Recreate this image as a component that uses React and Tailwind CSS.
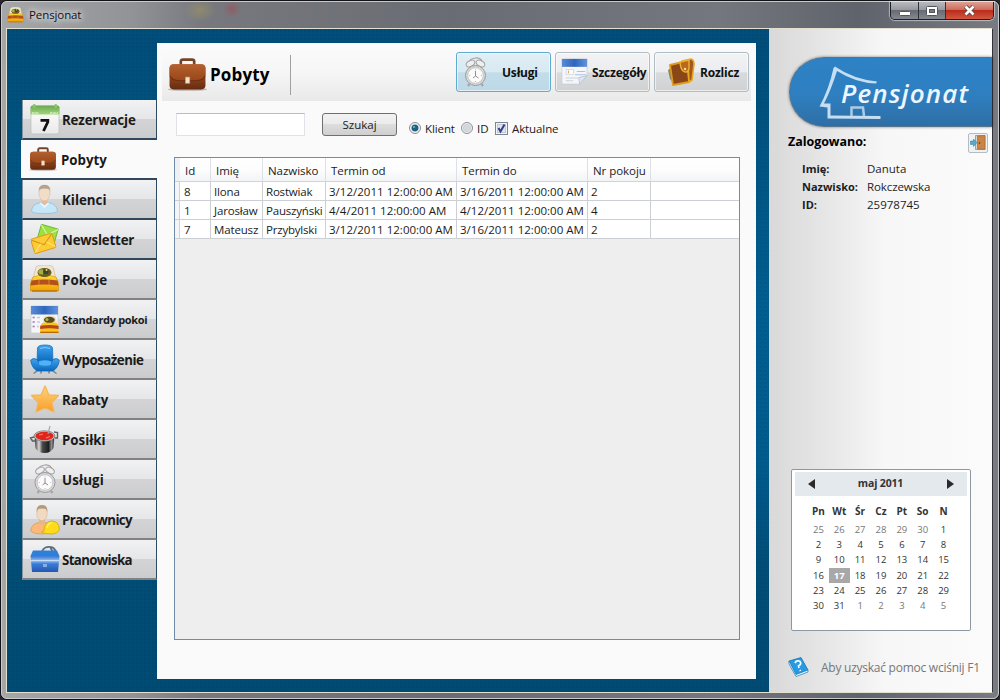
import React from 'react';

const Calendar7 = () => (
  <svg width="30" height="31" viewBox="0 0 30 31">
    <defs>
      <linearGradient id="grn" x1="0" y1="0" x2="0" y2="1"><stop offset="0" stopColor="#6aa850" /><stop offset="1" stopColor="#a4d67c" /></linearGradient>
      <linearGradient id="pg" x1="0" y1="0" x2="0" y2="1"><stop offset="0" stopColor="#ffffff" /><stop offset="1" stopColor="#e9e9ea" /></linearGradient>
    </defs>
    <rect x="1" y="2" width="28" height="28" rx="2" fill="url(#pg)" stroke="#bcbcbc" strokeWidth=".7" />
    <path d="M0.5 10.500V3.500Q.5 1.500 3 1.500H27Q29.500 1.500 29.500 3.500V10.500Z" fill="url(#grn)" />
    <path d="M2 9H9M20 9H28" stroke="#d5efbd" strokeWidth="1.600" strokeDasharray="2.500 .8" />
    <rect x="3" y="0" width="2.500" height="4" rx="1" fill="#8cc371" /><rect x="24.500" y="0" width="2.500" height="4" rx="1" fill="#8cc371" />
    <path d="M10.500 16.300H17.800V18L13.500 27" fill="none" stroke="#111" strokeWidth="2.800" />
  </svg>
);

const Briefcase = ({ w, h }) => (
  <svg width={w} height={h} viewBox="0 0 38 32">
    <defs>
      <linearGradient id="brn" x1="0" y1="0" x2="0" y2="1"><stop offset="0" stopColor="#b75f2c" /><stop offset=".55" stopColor="#8d411b" /><stop offset="1" stopColor="#642c10" /></linearGradient>
      <linearGradient id="flap" x1="0" y1="0" x2="0" y2="1"><stop offset="0" stopColor="#b4602f" /><stop offset="1" stopColor="#994719" /></linearGradient>
    </defs>
    <ellipse cx="19" cy="30.500" rx="19" ry="1.400" fill="#8a7468" opacity=".5" />
    <path d="M12.500 7V3.200Q12.500 1.500 14.500 1.500H23.500Q25.500 1.500 25.500 3.200V7" fill="none" stroke="#74442a" strokeWidth="2.600" />
    <rect x="1.500" y="6" width="35" height="24.500" rx="4" fill="url(#brn)" />
    <path d="M1.500 17V9.500Q2 6 5.500 6H32.500Q36 6 36.500 9.500V17Q34 22 27 22H11Q4 22 1.500 17Z" fill="url(#flap)" />
    <path d="M2 17.500Q4 22 11 22H27Q34 22 36 17.500" fill="none" stroke="#6a2e12" strokeWidth="1" />
    <rect x="17" y="18.500" width="4.200" height="6" fill="#f4e2cf" stroke="#c39b79" strokeWidth=".6" />
  </svg>
);

const Person = () => (
  <svg width="27" height="30" viewBox="0 0 27 30">
    <path d="M.5 27Q1 20 9.500 18.500L13.500 20L17.500 18.500Q26 20 26.500 27Q26 29.500 13.500 29.500T.5 27Z" fill="#c5e6f8" stroke="#8fbfdb" strokeWidth=".8" />
    <path d="M10.500 14H16.500V19L13.500 21L10.500 19Z" fill="#e6bd98" />
    <ellipse cx="13.500" cy="9.500" rx="5.500" ry="7.500" fill="#f3dcc6" stroke="#cfb39a" strokeWidth=".5" />
    <path d="M7.800 8Q6.800 1 13.500 .7Q20.200 1 19.200 8L18.500 5.500Q14 3.500 8.500 5.500Z" fill="#b5a18d" />
    <path d="M9.500 19L13.500 23L17.500 19" fill="none" stroke="#eef9ff" strokeWidth="1.300" />
  </svg>
);

const Mail = () => (
  <svg width="28" height="30" viewBox="0 0 28 30">
    <g transform="rotate(16 17 10)"><rect x="8" y="2.500" width="17.500" height="15" fill="#9be044" stroke="#67b32a" strokeWidth=".8" /><path d="M8 3L16.500 11L25.500 3M25.500 17L19 10" fill="none" stroke="#d3f79c" strokeWidth="1.200" /></g>
    <g transform="rotate(-17 12 20)"><rect x="1.500" y="12" width="22" height="15" rx="1" fill="#ffcb35" stroke="#dc9a12" strokeWidth=".9" /><path d="M2 13L13 21L23 13" fill="none" stroke="#d18f18" strokeWidth="1" /><path d="M2 26L10 19M23 26L16 19" fill="none" stroke="#ffe88a" strokeWidth=".9" /></g>
  </svg>
);

const Bed = ({ w = 29, h = 28 }) => (
  <svg width={w} height={h} viewBox="0 0 29 28">
    <defs><linearGradient id="gold" x1="0" y1="0" x2="0" y2="1"><stop offset="0" stopColor="#ffda3e" /><stop offset="1" stopColor="#f0a000" /></linearGradient></defs>
    <path d="M3 14L6 2Q7 0 14.500 0T23 2L26 14Z" fill="#f1e6d2" stroke="#d6bd8b" strokeWidth=".7" />
    <path d="M3 12Q14.500 8 26 12L28.500 18V26H.5V18Z" fill="url(#gold)" stroke="#d08c00" strokeWidth=".6" />
    <path d="M1.500 15.500Q14.500 13.500 27.500 15.500L28.500 20.500Q14.500 18.500 .5 20.500Z" fill="#b3501c" />
    <path d="M9 15V20M19 15V20" stroke="#e39433" strokeWidth=".8" />
    <path d="M2 26H27" stroke="#b97608" strokeWidth="1.400" />
    <ellipse cx="14.500" cy="7.500" rx="7" ry="4.500" fill="#6a5b22" />
    <path d="M8 7Q9 3.500 13 4.500L13 9.500Q9 10 8 7Z" fill="#a3b23c" /><circle cx="16" cy="6.500" r="2.600" fill="#36482b" /><circle cx="16.500" cy="5" r="1" fill="#f2d784" />
  </svg>
);

const Sheet = ({ w = 29, h = 29, bed }) => (
  <svg width={w} height={h} viewBox="0 0 29 29">
    <defs><linearGradient id="blu" x1="0" y1="0" x2="1" y2="0"><stop offset="0" stopColor="#5b8bd6" /><stop offset=".5" stopColor="#2f66bb" /><stop offset="1" stopColor="#6292dc" /></linearGradient></defs>
    <path d="M1 1H28V19L20 28H1Z" fill="#f4f6f9" stroke="#c4ccd6" strokeWidth=".7" />
    <rect x="1" y="1" width="27" height="8.500" fill="url(#blu)" />
    {bed ? (
      <g>
        <path d="M2 12.500H5M7 12.500H10M2 17H5M7 17H10M2 21.500H5M7 21.500H9" stroke="#cfc3da" strokeWidth="1.500" />
        <path d="M3 12.500H4.500M3 17H4.500M3 21.500H4.500" stroke="#b37bb0" strokeWidth="1.500" />
        <g transform="translate(9.500 10.500) scale(.68 .66)">
          <path d="M4 14L6 3Q8 0 14.500 0T24 3L26 14Z" fill="#f1dfba" /><path d="M3 12Q14.500 8 26 12L28 18V26H1V18Z" fill="#ffc21c" /><path d="M1 15.500Q14.500 13 28 15.500V20.500Q14.500 18.500 1 20.500Z" fill="#b4461a" /><path d="M1 25.500H28" stroke="#b66b00" strokeWidth="2" /><ellipse cx="14.500" cy="6.500" rx="8" ry="4.500" fill="#594b1d" /><circle cx="11" cy="6" r="2.300" fill="#a6b844" />
        </g>
      </g>
    ) : (
      <g>
        <rect x="5.500" y="12.500" width="8" height="5" fill="#ffffff" stroke="#c3d0e2" strokeWidth=".7" /><path d="M8 13.500V16.500" stroke="#e2a95f" strokeWidth="1.300" />
        <path d="M17 14.500H26M15 18H27" stroke="#a9c2e6" strokeWidth="1.300" /><path d="M5 21.500H18M5 24.500H13" stroke="#ccd4de" strokeWidth="1.200" />
        <path d="M28 19L20 28L19 21Z" fill="#dfe6ef" stroke="#a9b6c8" strokeWidth=".7" />
      </g>
    )}
  </svg>
);

const Armchair = () => (
  <svg width="30" height="31" viewBox="0 0 30 31">
    <defs><linearGradient id="arm" x1="0" y1="0" x2="0" y2="1"><stop offset="0" stopColor="#3fa3ee" /><stop offset="1" stopColor="#0a68bd" /></linearGradient></defs>
    <path d="M7 27L3.500 29.500M23 27L26.500 29.500M11 27V29.500M19 27V29.500" stroke="#77828b" strokeWidth="1.500" />
    <path d="M7 18L7.500 4Q8 1 15 1T22.500 4L23 18Z" fill="url(#arm)" stroke="#1576c4" strokeWidth=".8" />
    <path d="M.7 16.500Q3 13 7.500 16L9 20H21L22.500 16Q27 13 29.300 16.500Q28 24 23 27H7Q2 24 .7 16.500Z" fill="url(#arm)" stroke="#0c68b4" strokeWidth=".8" />
    <path d="M8.500 17.500Q15 15 21.500 17.500L20.500 21Q15 22.500 9.500 21Z" fill="#4fb2f6" />
    <path d="M10 4.500Q15 2.500 20 4.500" stroke="#83caff" fill="none" />
  </svg>
);

const Star = () => (
  <svg width="30" height="30" viewBox="0 0 30 30">
    <defs><linearGradient id="star" x1="0" y1="0" x2="0" y2="1"><stop offset="0" stopColor="#ffd777" /><stop offset="1" stopColor="#f99b2b" /></linearGradient></defs>
    <path d="M15 2L18.800 10.800L28.500 11.500L21.800 18.500L24 28L15 24L6 28L8.200 18.500L1.500 11.500L11.200 10.800Z" fill="url(#star)" stroke="#f3b65a" strokeWidth="1.300" strokeLinejoin="round" />
  </svg>
);

const Pot = () => (
  <svg width="31" height="29" viewBox="0 0 31 29">
    <defs><linearGradient id="pot" x1="0" y1="0" x2="1" y2="0"><stop offset="0" stopColor="#2e2e2e" /><stop offset=".22" stopColor="#d8d8d8" /><stop offset=".4" stopColor="#4a4a4a" /><stop offset=".7" stopColor="#1f1f1f" /><stop offset=".85" stopColor="#8d8d8d" /><stop offset="1" stopColor="#2b2b2b" /></linearGradient></defs>
    <path d="M6 16H3.500L1.500 13L5 12M26 13H28.500V7.500L25 7" fill="none" stroke="#5c6063" strokeWidth="1.400" />
    <path d="M5.500 10H25.500L24.500 23Q22 28 15.500 28T6.500 23Z" fill="url(#pot)" />
    <ellipse cx="15.500" cy="11" rx="10.500" ry="5.200" fill="#d0d0d0" stroke="#6a6a6a" strokeWidth=".7" /><ellipse cx="15.500" cy="11" rx="9.200" ry="4.200" fill="#e0251d" /><path d="M10 10L14 9M17 13L21 11.500" stroke="#ff7562" strokeWidth="1.200" />
    <path d="M19 9L21 1" stroke="#a8a8a8" strokeWidth="1.200" />
  </svg>
);

const Clock = ({ w = 24, h = 30 }) => (
  <svg width={w} height={h} viewBox="0 0 24 30">
    <path d="M4.500 8Q5 1.500 12 1T19.500 8" fill="none" stroke="#a0a0a0" strokeWidth="1.200" />
    <ellipse cx="7" cy="6.500" rx="4.600" ry="2.900" transform="rotate(-28 7 6.500)" fill="#efefef" stroke="#a3a3a3" /><ellipse cx="17" cy="6.500" rx="4.600" ry="2.900" transform="rotate(28 17 6.500)" fill="#efefef" stroke="#a3a3a3" />
    <path d="M6 27L4.500 29M18 27L19.500 29" stroke="#a5a5a5" strokeWidth="2.200" />
    <circle cx="12" cy="18.500" r="10" fill="#d9d9d9" stroke="#9a9a9a" strokeWidth="1" /><circle cx="12" cy="18.500" r="7.800" fill="#fbfbfb" stroke="#bcbcbc" strokeWidth=".8" />
    <path d="M12 14V19L15 21M12 19L9.500 21" fill="none" stroke="#8a8080" strokeWidth=".9" />
    <path d="M12 12.500V13.300M5.800 18.500H6.600M17.400 18.500H18.200M12 24V24.800" stroke="#aaa" />
  </svg>
);

const Worker = () => (
  <svg width="30" height="31" viewBox="0 0 30 31">
    <path d="M.7 27Q1 20 9 18.500H15Q23 20 24 27Q20 30 12 30T.7 27Z" fill="#fbb878" stroke="#dd9a5c" strokeWidth=".8" />
    <path d="M9 14H15V19L12 21L9 19Z" fill="#e4b68c" /><ellipse cx="12" cy="9.500" rx="5.200" ry="7.300" fill="#f2dac0" stroke="#cbab8a" strokeWidth=".5" /><path d="M6.700 8Q6 1 12 1T17.300 8L16 5Q12 3.800 8 5Z" fill="#b39a7c" />
    <path d="M14 27Q14 17.500 22 17Q29 17.500 29.300 25Q29 29 22 30Q16 30 11.500 28.500Q11 27 14 27Z" fill="#ffdb1c" stroke="#d6ab0a" strokeWidth=".9" /><path d="M17 24Q18 19 22 18.500" fill="none" stroke="#fff18a" strokeWidth="1.200" />
  </svg>
);

const Toolbox = () => (
  <svg width="30" height="28" viewBox="0 0 30 28">
    <defs><linearGradient id="tb" x1="0" y1="0" x2="0" y2="1"><stop offset="0" stopColor="#3a78d2" /><stop offset=".3" stopColor="#8fbaf0" /><stop offset=".5" stopColor="#3a7bd8" /><stop offset="1" stopColor="#2457ae" /></linearGradient></defs>
    <path d="M12 6Q15 1.500 20 2Q25 2 26 8M20 2.500L24 8" stroke="#5d6c79" strokeWidth="1.800" fill="none" /><path d="M15 4.500L20 3.500" stroke="#e0e7eb" strokeWidth="1.300" />
    <path d="M3 5.500H27L29.500 11H.5Z" fill="#2f7fd8" /><path d="M.5 11H29.500L28 27H2Z" fill="url(#tb)" />
    <path d="M.5 15.500H29" stroke="#c7def9" strokeWidth="1.200" /><rect x="13" y="19" width="4" height="3" fill="#86aee4" />
  </svg>
);

const Wallet = () => (
  <svg width="28" height="28" viewBox="0 0 28 28">
    <path d="M1 12L4 10L6 24L3 21Z" fill="#8b8069" />
    <path d="M3 7L20 3L22 24L6 27Z" fill="#8a4616" stroke="#dc9a1f" strokeWidth="1.800" strokeLinejoin="round" />
    <path d="M15 3L24 1Q27 2 27 6L25 22L22 24L21 5Z" fill="#a3561d" stroke="#e8a51f" strokeWidth="1.600" strokeLinejoin="round" />
    <path d="M13 4L22 2V11Q20 16 16 13Q13.500 11 13 4Z" fill="#b8691f" stroke="#f0b232" strokeWidth="1.400" /><circle cx="18" cy="11" r="1.200" fill="#ffe18b" />
  </svg>
);

const items = [
  ['Rezerwacje', <Calendar7 />, 'tracking-[-0.16px]'],
  ['Pobyty', <Briefcase w="28" h="24" />, 'tracking-[0px]'],
  ['Kilenci', <Person />, 'tracking-[0px]'],
  ['Newsletter', <Mail />, 'tracking-[-0.18px]'],
  ['Pokoje', <Bed />, 'tracking-[0.05px]'],
  ['Standardy pokoi', <Sheet bed />, 'text-[11px] tracking-[-0.32px]'],
  ['Wyposażenie', <Armchair />, 'tracking-[-0.48px]'],
  ['Rabaty', <Star />, 'tracking-[-0.05px]'],
  ['Posiłki', <Pot />, 'tracking-[0px]'],
  ['Usługi', <Clock />, 'tracking-[0.15px]'],
  ['Pracownicy', <Worker />, 'tracking-[-0.6px]'],
  ['Stanowiska', <Toolbox />, 'tracking-[-0.65px]'],
];

function Sidebar() {
  return (
    <nav className="w-[150px] shrink-0 pl-[14px] pt-[71px]">
      {items.map(([label, icon, cls], i) => {
        const active = i === 1;
        return (
          <div
            key={label}
            className={
              'flex h-10 items-center text-[#1a1a1a] ' +
              (active
                ? 'border-b-2 border-[#33475c] bg-[#fafafa]'
                : 'ml-px border-b-2 border-r border-r-[#2c4a61] border-l border-l-[#8496a3] bg-[linear-gradient(#f2f2f3_0%,#e5e6e8_50%,#d4d4d6_51%,#cbccce_100%)] ' +
                  (i < 4 ? 'border-b-[#33475c]' : 'border-b-[#808285]'))
            }
          >
            <span className={'flex justify-center ' + (active ? 'w-[40px] pl-[4px]' : 'w-[39px] pl-[4px]')}>{icon}</span>
            <span className={'whitespace-nowrap pt-px font-bold leading-5 ' + (i === 5 ? '' : 'text-[13.3px] ') + cls}>{label}</span>
          </div>
        );
      })}
    </nav>
  );
}

function ToolButton({ icon, label, active, pad, text = '' }) {
  return (
    <div
      className={
        'flex h-10 w-[95px] items-center rounded-[3px] border shadow-[inset_0_0_0_1px_rgba(255,255,255,0.6)] ' +
        (active
          ? 'border-[#60a9cf] bg-[linear-gradient(#e1eff6_0%,#d8e9f1_50%,#c2dcea_52%,#bdd9e8_100%)]'
          : 'border-[#b1bdc5] bg-[linear-gradient(#f3f3f4_0%,#ebecee_50%,#d9dadb_52%,#d0d1d3_100%)]')
      }
    >
      <span className={'flex shrink-0 ' + pad}>{icon}</span>
      <span className={'whitespace-nowrap pt-px text-[12px] font-bold tracking-[-0.2px] text-[#111] ' + text}>{label}</span>
    </div>
  );
}

const cols = ['w-[31px]', 'w-[52px]', 'w-[63px]', 'w-[131px]', 'w-[131px]', 'w-[63px]'];
const tracks = ['', 'tracking-[-0.15px]', 'tracking-[-0.2px]', 'tracking-[0.02px]', 'tracking-[0.02px]', ''];
const heads = ['Id', 'Imię', 'Nazwisko', 'Termin od', 'Termin do', 'Nr pokoju'];
const rows = [
  ['8', 'Ilona', 'Rostwiak', '3/12/2011 12:00:00 AM', '3/16/2011 12:00:00 AM', '2'],
  ['1', 'Jarosław', 'Pauszyński', '4/4/2011 12:00:00 AM', '4/12/2011 12:00:00 AM', '4'],
  ['7', 'Mateusz', 'Przybylski', '3/12/2011 12:00:00 AM', '3/16/2011 12:00:00 AM', '2'],
];

function Grid() {
  return (
    <div className="h-[483px] w-[566px] border border-[#6f8ca8] bg-[#eeeeee] text-[11.5px] text-[#1b1b1b]">
      <div className="flex h-6 border-b border-[#cfd4d9] bg-[linear-gradient(#ffffff_0%,#fdfdfe_50%,#f2f4f6_100%)]">
        <div className="w-[5px] bg-[#eef1f4]" />
        {heads.map((h, i) => (
          <div key={h} className={'flex items-center whitespace-nowrap border-r border-[#dde1e6] pl-[5px] pt-[2px] tracking-[-0.05px] ' + cols[i]}>{h}</div>
        ))}
      </div>
      {rows.map((r) => (
        <div key={r[0]} className="flex h-[19px] border-b border-[#ccd0d4] bg-white">
          <div className="w-[5px] border-r border-[#cfd3d8] bg-[#f3f5f7]" />
          {r.map((c, i) => (
            <div key={i} className={'flex items-center whitespace-nowrap border-r border-[#ccd0d4] pt-px ' + (i === 0 ? 'pl-[4px] ' : 'pl-[3px] ') + cols[i] + ' ' + tracks[i]}>{c}</div>
          ))}
        </div>
      ))}
    </div>
  );
}

function Main() {
  return (
    <main className="mt-[14px] h-[636px] w-[599px] shrink-0 bg-[#fafafa]">
      <header className="mx-[5px] flex h-[58px] items-start bg-[linear-gradient(#fbfbfb_0%,#f6f6f6_50%,#e9e9ea_100%)]">
        <div className="mt-[12px] flex h-10 w-[129px] items-center border-r border-[#a0a0a0] pl-[6px]">
          <span className="flex pb-[2px]"><Briefcase w="39" h="33" /></span>
          <h1 className="ml-[3px] text-[17px] font-bold tracking-[0.15px] text-black">Pobyty</h1>
        </div>
        <div className="ml-auto mr-[2px] mt-[9px] flex gap-1">
          <ToolButton active icon={<Clock w={25} h={30} />} label="Usługi" pad="pl-[6px] w-[45px]" />
          <ToolButton icon={<Sheet w={27} h={31} />} label="Szczegóły" pad="pl-[5px] pb-[2px] w-[36px]" text="pt-[2px]" />
          <ToolButton icon={<Wallet />} label="Rozlicz" pad="pl-[12px] w-[45px]" text="pt-[2px]" />
        </div>
      </header>
      <div className="flex h-[56px] items-start pl-[19px] pt-[12px] text-[12px] text-[#1b1b1b]">
        <div className="h-[23px] w-[129px] border border-[#dfe2e6] border-t-[#b8bcc4] bg-white" />
        <button className="ml-[17px] flex h-[23px] w-[75px] items-center justify-center rounded-[3px] border border-[#707070] bg-[linear-gradient(#f2f2f2_0%,#ebebeb_48%,#dddddd_50%,#cfcfcf_100%)] text-[11.5px]">Szukaj</button>
        <div className="ml-[12px] mt-[7px] flex h-4 items-center text-[11.5px]">
          <Radio on />
          <span className="ml-[4px] w-[30px] pt-px tracking-[-0.1px]">Klient</span>
          <span className="ml-[6px] flex"><Radio /></span>
          <span className="ml-[4px] w-[12px] pt-px">ID</span>
          <svg className="ml-[6px]" width="13" height="13" viewBox="0 0 13 13"><rect x=".5" y=".5" width="12" height="12" fill="#f4f4f4" stroke="#7b8696" /><rect x="2.500" y="2.500" width="8" height="8" fill="#dfe3ea" stroke="#c2c8d2" /><path d="M3.500 6L5.500 9.500L9.500 2.500" fill="none" stroke="#313f8c" strokeWidth="2" /></svg>
          <span className="ml-[4px] pt-px tracking-[-0.1px]">Aktualne</span>
        </div>
      </div>
      <div className="pl-[17px]"><Grid /></div>
    </main>
  );
}

const Radio = ({ on }) => (
  <svg width="12" height="12" viewBox="0 0 12 12">
    <circle cx="6" cy="6" r="5.500" fill="#f3f3f3" stroke="#8a8f94" />
    <circle cx="6" cy="6" r="3.800" fill={on ? '#bfe0ee' : '#d5d8db'} stroke="#c0c7cc" strokeWidth=".6" />
    {on && <circle cx="6" cy="6" r="3" fill="#18658a" stroke="#123e57" strokeWidth=".6" />}
    {on && <circle cx="5" cy="5" r="1" fill="#67bfdf" />}
  </svg>
);

const days = ['25','26','27','28','29','30','1','2','3','4','5','6','7','8','9','10','11','12','13','14','15','16','17','18','19','20','21','22','23','24','25','26','27','28','29','30','31','1','2','3','4','5'];

function MonthView() {
  return (
    <section className="ml-[22px] h-[162px] w-[180px] rounded-[2px] border border-[#8e98a3] bg-white px-[3px] pt-[2px] text-[#333]">
      <div className="flex h-[24px] items-center justify-between bg-[#e4e9ee] px-[13px] text-[10.5px] font-bold">
        <svg width="7" height="10" viewBox="0 0 7 10"><path d="M7 0V10L0 5Z" fill="#2a2a2a" /></svg>
        <span className="pr-px tracking-[-0.15px]">maj 2011</span>
        <svg width="7" height="10" viewBox="0 0 7 10"><path d="M0 0V10L7 5Z" fill="#2a2a2a" /></svg>
      </div>
      <div className="ml-[13px] mt-[5px] grid w-[146px] grid-cols-7 text-center text-[9.5px]">
        {['Pn', 'Wt', 'Śr', 'Cz', 'Pt', 'So', 'N'].map((d) => <span key={d} className="h-[20.5px] text-[10px] font-bold leading-[20px]">{d}</span>)}
        {days.map((d, i) => {
          const out = i < 6 || i > 36;
          return (
            <span key={i} className={'h-[15.4px] leading-[15.9px] ' + (i === 22 ? 'bg-[#a8a8a8] font-bold text-white' : out ? 'text-[#777]' : 'text-[#333]')}>{d}</span>
          );
        })}
      </div>
    </section>
  );
}

function RightPanel() {
  return (
    <aside className="flex w-[223px] shrink-0 flex-col bg-[linear-gradient(90deg,#d9d9da_0%,#e6e6e7_25%,#f7f7f7_52%,#fbfbfb_100%)]">
      <div className="relative ml-[20px] mt-[28px] h-[70px] rounded-l-full border border-r-0 border-[#55748e] bg-[linear-gradient(#2d82c5_0%,#2e7fc0_55%,#2f6ea5_100%)] pl-[51px] pt-[14px] shadow-[0_0_3px_rgba(0,0,0,0.5)]">
        <svg className="absolute left-[28px] top-[7px]" width="64" height="56" viewBox="0 0 64 56">
          <path d="M17 1.500Q35 14 59 16.500L58 18.500Q38 18 19 6Q13 25 6 38.500H12.500V50.500L62.500 51V54L9.500 53.500V42.500L1.500 41.500Q11 24 15.500 3Z" fill="#c5def2" />
          <path d="M33.500 51V42.500H45L46 51" fill="none" stroke="#a9cce8" strokeWidth="2.500" />
        </svg>
        <span className="relative text-[26px] font-semibold italic leading-[42px] tracking-[1.1px] text-[#edf6ff]">Pensjonat</span>
      </div>
      <div className="flex h-[31px] items-center justify-between pl-[19px] pr-[4px]">
        <span className="text-[12.5px] font-bold tracking-[-0.05px] text-black">Zalogowano:</span>
        <span className="flex h-5 w-5 items-center justify-center rounded-[2px] border border-[#b3bcc3] bg-[#eef2f5]">
          <svg width="16" height="17" viewBox="0 0 16 17"><path d="M5.500 1.500H15V15.500H5.500Z" fill="#d9d5cf" stroke="#b98660" strokeWidth=".8" /><path d="M7.500 2L15 1.500V15.500L7.500 15Z" fill="#c98546" stroke="#a3602c" strokeWidth=".6" /><path d="M.5 7H3.500V5L7 8.500L3.500 12.500V10.500H.5Z" fill="#5ba6c9" stroke="#3d89aa" strokeWidth=".6" /><circle cx="9.500" cy="9" r=".8" fill="#5c3414" /></svg>
        </span>
      </div>
      <dl className="mt-[2px] grid grid-cols-[65px_1fr] pl-[33px] text-[11.5px] leading-[17.9px] text-[#1d1d1d]">
        <dt className="font-bold text-[11px]">Imię:</dt><dd>Danuta</dd>
        <dt className="font-bold text-[11px]">Nazwisko:</dt><dd className="tracking-[-0.1px]">Rokczewska</dd>
        <dt className="font-bold text-[11px]">ID:</dt><dd>25978745</dd>
      </dl>
      <div className="mt-auto"><MonthView /></div>
      <div className="mb-[14px] mt-[25px] flex h-[22px] items-center pl-[19px] text-[12px] text-[#777]">
        <svg width="21" height="20" viewBox="0 0 21 20"><path d="M1 4L13 .5L20 13L8 18Z" fill="#259be5" stroke="#0d6cad" strokeWidth=".7" /><path d="M1 4V7L8 19.500L20 15V13L8 17.500Z" fill="#eff9ff" stroke="#1678b7" strokeWidth=".7" /><path d="M7 6Q9 2.500 12 4.500Q14 7 10.500 9L11 11M12 13L12.500 14" fill="none" stroke="#fff" strokeWidth="1.700" /></svg>
        <span className="ml-[12px] whitespace-nowrap pt-px tracking-[-0.25px]">Aby uzyskać pomoc wciśnij F1</span>
      </div>
    </aside>
  );
}

function TitleBar() {
  return (
    <div className="flex h-[26px] items-start pl-[5px]">
      <span className="mt-[5px] flex"><Bed w={17} h={16} /></span>
      <span className="ml-[5px] mt-[4px] text-[11.5px] leading-[18px] tracking-[-0.1px] text-[#111] [text-shadow:0_0_6px_#fff,0_0_8px_#fff]">Pensjonat</span>
      <div className="ml-auto mr-[4px] flex h-[18px] w-[104px] overflow-hidden rounded-b-[5px] border border-t-0 border-[#1d2127] shadow-[0_0_1px_1px_rgba(255,255,255,0.5)]">
        <span className="flex w-[28px] items-center justify-center border-r border-[#30343a] bg-[linear-gradient(#b8babf_0%,#94979e_48%,#686b72_50%,#858890_100%)] pt-[5px]">
          <svg width="12" height="5"><rect x=".5" y=".5" width="11" height="4" rx="1" fill="#fff" stroke="#51565d" /></svg>
        </span>
        <span className="flex w-[27px] items-center justify-center border-r border-[#30343a] bg-[linear-gradient(#b8babf_0%,#94979e_48%,#686b72_50%,#858890_100%)]">
          <svg width="12" height="10"><rect x=".5" y=".5" width="11" height="9" rx="1" fill="#fff" stroke="#51565d" /><rect x="3.500" y="3.500" width="5" height="3" fill="#777c84" stroke="#51565d" /></svg>
        </span>
        <span className="flex flex-1 items-center justify-center bg-[linear-gradient(#dda195_0%,#cf6855_48%,#b92d1c_50%,#d3573f_100%)]">
          <svg width="13" height="11" viewBox="0 0 13 11"><path d="M2.500 1.500L10.500 9.500M10.500 1.500L2.500 9.500" stroke="#5d4544" strokeWidth="4.400" /><path d="M2.500 1.500L10.500 9.500M10.500 1.500L2.500 9.500" stroke="#fff" strokeWidth="2.600" /></svg>
        </span>
      </div>
    </div>
  );
}

export default function App() {
  return (
    <div className="h-[700px] w-[1000px] overflow-hidden bg-[#2c2630] font-['Open_Sans','Noto_Sans',sans-serif]">
      <div className="h-[700px] w-[1000px] rounded-[7px] border border-[#101216] bg-[#77787a]">
        <div className="h-[698px] rounded-[6px] border border-[#c9cacd] bg-[radial-gradient(ellipse_16px_12px_at_198px_8px,rgba(150,141,106,0.8),transparent),radial-gradient(circle_9px_at_230px_7px,rgba(154,83,90,0.7),transparent),linear-gradient(90deg,#a5a6a8_0,#929396_13%,#77797f_20%,#696c72_45%,#74777d_72%,#5f636b_86%,#787b82_100%)]">
          <TitleBar />
          <div className="ml-[4px] flex h-[665px] w-[987px] border border-[#e5dfcf] border-r-[#30343a] bg-[#005583]">
            <div className="flex w-[762px] shrink-0 bg-[radial-gradient(rgba(0,25,55,0.07)_0.7px,transparent_1.2px),linear-gradient(#004e79_0%,#00517c_10%,#005e90_42%,#005c8d_65%,#004d75_82%,#004b73_100%)] bg-[size:4px_4px,100%_100%]">
              <Sidebar />
              <Main />
            </div>
            <RightPanel />
          </div>
        </div>
      </div>
    </div>
  );
}
